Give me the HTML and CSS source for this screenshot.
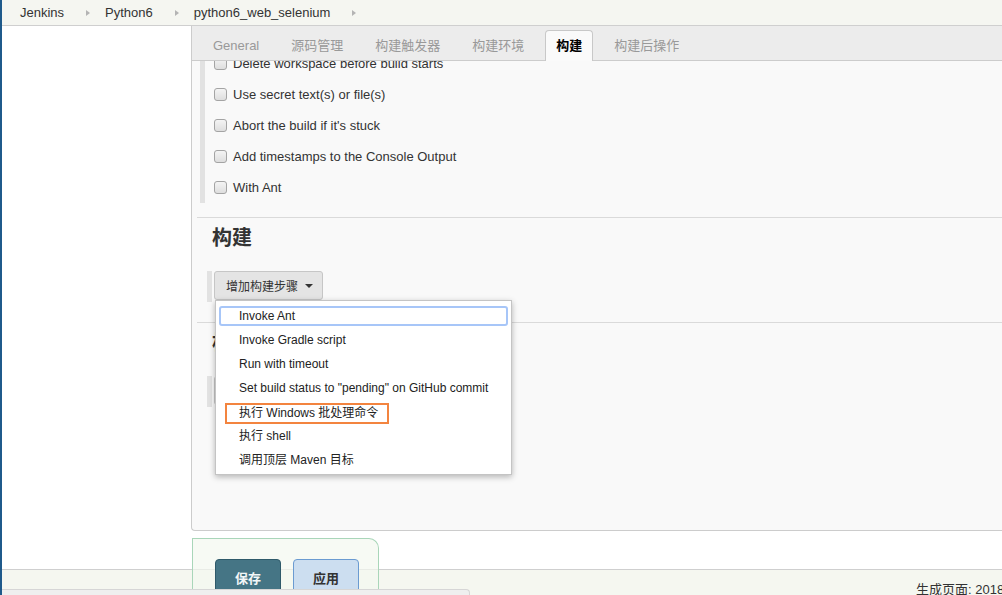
FILE: index.html
```html
<!DOCTYPE html>
<html lang="zh-CN">
<head>
<meta charset="utf-8">
<title>python6_web_selenium Config [Jenkins]</title>
<link rel="stylesheet" href="styles.css">
</head>
<body>
<div class="page">
  <header class="breadcrumbs">
    <a class="crumb">Jenkins</a><span class="sep"></span>
    <a class="crumb">Python6</a><span class="sep"></span>
    <a class="crumb">python6_web_selenium</a><span class="sep"></span>
  </header>
  <div class="main">
    <aside class="side-panel"></aside>
    <div class="main-panel">
      <div class="config">
        <nav class="tabbar">
          <span class="tab">General</span>
          <span class="tab">源码管理</span>
          <span class="tab">构建触发器</span>
          <span class="tab">构建环境</span>
          <span class="tab active">构建</span>
          <span class="tab">构建后操作</span>
        </nav>
        <div class="config-body">
          <div class="optional-block">
            <label class="opt"><span class="cb"></span>Delete workspace before build starts</label>
            <label class="opt"><span class="cb"></span>Use secret text(s) or file(s)</label>
            <label class="opt"><span class="cb"></span>Abort the build if it's stuck</label>
            <label class="opt"><span class="cb"></span>Add timestamps to the Console Output</label>
            <label class="opt"><span class="cb"></span>With Ant</label>
          </div>
          <hr class="rule">
          <h2 class="section-title">构建</h2>
          <div class="step-adder">
            <button class="add-btn">增加构建步骤<span class="caret"></span></button>
            <ul class="menu">
              <li class="focused">Invoke Ant</li>
              <li>Invoke Gradle script</li>
              <li>Run with timeout</li>
              <li>Set build status to "pending" on GitHub commit</li>
              <li class="annotated"><span class="mark">执行 Windows 批处理命令</span></li>
              <li>执行 shell</li>
              <li>调用顶层 Maven 目标</li>
            </ul>
          </div>
          <hr class="rule">
          <h2 class="section-title">构建后操作</h2>
          <div class="step-adder">
            <button class="add-btn">增加构建后操作步骤<span class="caret"></span></button>
          </div>
        </div>
      </div>
      <div class="bottom-sticker">
        <button class="btn btn-save">保存</button>
        <button class="btn btn-apply">应用</button>
      </div>
    </div>
  </div>
  <footer class="footer"><span>生成页面: 2018-10-18 下午09:27:46</span></footer>
  <div class="hscroll"></div>
</div>
</body>
</html>
```

FILE: styles.css
```css
* { box-sizing: border-box; }
html, body { margin: 0; padding: 0; }
body {
  width: 1002px;
  height: 595px;
  overflow: hidden;
  border-left: 2px solid #1f5a8b;
  font-family: "Liberation Sans", Arial, "Noto Sans CJK SC", sans-serif;
  font-size: 13px;
  color: #333;
  background: #fff;
}
.page {
  position: relative;
  display: flex;
  flex-direction: column;
  height: 595px;
}

/* breadcrumbs */
.breadcrumbs {
  flex: none;
  height: 26px;
  display: flex;
  align-items: center;
  padding-left: 18px;
  background: #f5f6f1;
  border-bottom: 1px solid #cfcfcf;
  line-height: 25px;
}
.crumb { color: #333; text-decoration: none; white-space: nowrap; }
.sep {
  width: 0;
  height: 0;
  margin: 1px 15px 0 22px;
  border-left: 4px solid #b4b4b4;
  border-top: 3px solid transparent;
  border-bottom: 3px solid transparent;
}

/* main area */
.main {
  flex: none;
  height: 543px;
  display: flex;
}
.side-panel { flex: none; width: 189px; background: #fff; }
.main-panel {
  flex: 1;
  min-width: 0;
  display: flex;
  flex-direction: column;
}
.config {
  flex: none;
  height: 505px;
  display: flex;
  flex-direction: column;
  background: #f9f9f9;
  border-left: 1px solid #cccccc;
  border-bottom: 1px solid #cccccc;
  border-bottom-left-radius: 4px;
  overflow: hidden;
}

/* tabs */
.tabbar {
  flex: none;
  height: 35px;
  display: flex;
  align-items: flex-end;
  gap: 10px;
  padding-left: 10px;
  background: #ececec;
  border-bottom: 1px solid #cccccc;
}
.tab {
  height: 31px;
  margin-bottom: -1px;
  padding: 0 10px;
  line-height: 29px;
  color: #999;
  white-space: nowrap;
  border: 1px solid transparent;
  border-bottom: 0;
  border-radius: 4px 4px 0 0;
}
.tab.active {
  background: #fafafa;
  border-color: #c8c8c8;
  color: #000;
  font-weight: bold;
}

/* body of the form */
.config-body {
  flex: 1;
  overflow: hidden;
  padding-left: 5px;
}
.optional-block {
  margin: -13px 0 0 3px;
  border-left: 5px solid #e2e2e2;
  padding-left: 9px;
}
.opt {
  display: flex;
  align-items: center;
  height: 31px;
  color: #333;
  white-space: nowrap;
}
.cb {
  flex: none;
  width: 13px;
  height: 13px;
  margin-right: 6px;
  border: 1px solid #a4a4a4;
  border-radius: 3px;
  background: linear-gradient(#f4f4f4, #dedede);
}
.rule {
  margin: 14px 0 0;
  height: 0;
  border: 0;
  border-top: 1px solid #dadada;
}
.step-adder + .rule { margin-top: 20px; }
.section-title {
  margin: 6px 0 0 15px;
  font-size: 20px;
  line-height: 28px;
  font-weight: bold;
  color: #333;
}
.step-adder {
  position: relative;
  width: max-content;
  margin: 19px 0 0 10px;
  padding: 0 0 2px 2px;
  border-left: 5px solid #e2e2e2;
}
.add-btn {
  display: flex;
  align-items: center;
  height: 29px;
  padding: 0 9px 0 11px;
  font-family: inherit;
  font-size: 12px;
  color: #333;
  background: #e4e4e4;
  border: 1px solid #c6c6c6;
  border-radius: 3px;
}
.caret {
  margin-left: 7px;
  width: 0;
  height: 0;
  border-top: 4px solid #333;
  border-left: 4px solid transparent;
  border-right: 4px solid transparent;
}

/* dropdown menu */
.menu {
  position: absolute;
  left: 3px;
  top: 29px;
  z-index: 5;
  width: 297px;
  margin: 0;
  padding: 5px 0 0;
  list-style: none;
  background: #fff;
  border: 1px solid #c4c4c4;
  box-shadow: 0 2px 6px rgba(0, 0, 0, 0.28);
  font-size: 12px;
}
.menu li {
  display: flex;
  align-items: center;
  height: 20px;
  margin: 0 3px 4px;
  padding-left: 18px;
  border: 2px solid transparent;
  border-radius: 3px;
  line-height: 16px;
  color: #222;
  white-space: nowrap;
}
.menu li.focused { border-color: #a7c6f8; }
.menu li.annotated { align-items: flex-start; }
.mark {
  display: inline-block;
  height: 21px;
  margin: -1px 0 0 -14px;
  padding: 0 9px 0 12px;
  line-height: 17px;
  border: 2px solid #f3843f;
}

/* sticky save bar */
.bottom-sticker {
  position: relative;
  z-index: 2;
  flex: none;
  display: flex;
  align-items: flex-start;
  gap: 12px;
  width: 187px;
  height: 70px;
  margin: 7px 0 0 1px;
  padding: 20px 0 0 22px;
  background: rgba(244, 248, 240, 0.7);
  border: 1px solid #a9d6b9;
  border-bottom: 0;
  border-top-right-radius: 10px;
}
.btn {
  width: 66px;
  height: 37px;
  padding: 0;
  font-family: inherit;
  font-size: 13px;
  font-weight: bold;
  border-radius: 4px;
}
.btn-save {
  background: #457585;
  border: 1px solid #2f5a6a;
  color: #f2f6f7;
}
.btn-apply {
  background: #ccdef0;
  border: 1px solid #6b9bd1;
  color: #333;
}

/* footer */
.footer {
  flex: none;
  height: 26px;
  padding: 12px 0 0 914px;
  line-height: 16px;
  white-space: nowrap;
  overflow: hidden;
  background: #f5f7f0;
  border-top: 1px solid #cfcfcf;
  color: #333;
}
.hscroll {
  position: absolute;
  left: 0;
  bottom: 0;
  z-index: 3;
  width: 468px;
  height: 6px;
  background: #efefef;
  border-top: 1px solid #d6d6d6;
  border-right: 1px solid #d6d6d6;
  border-top-right-radius: 4px;
}
```
